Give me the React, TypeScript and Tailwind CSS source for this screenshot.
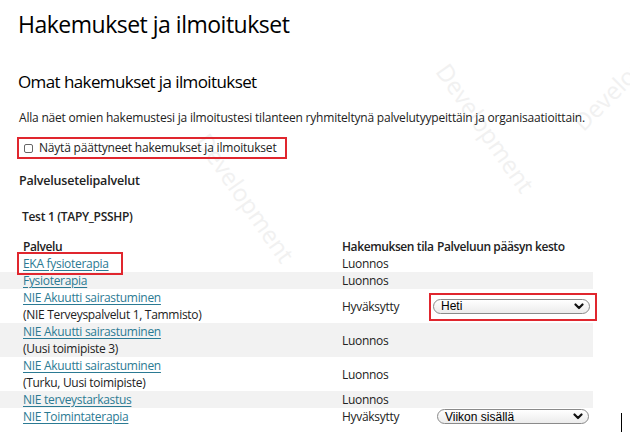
import React from "react";

type Row = {
  name: string;
  place?: string;
  status: string;
  duration?: string;
  striped?: boolean;
  marked?: boolean;
};

const rows: Row[] = [
  { name: "EKA fysioterapia", status: "Luonnos", marked: true },
  { name: "Fysioterapia", status: "Luonnos", striped: true },
  { name: "NIE Akuutti sairastuminen", place: "(NIE Terveyspalvelut 1, Tammisto)", status: "Hyväksytty", duration: "Heti" },
  { name: "NIE Akuutti sairastuminen", place: "(Uusi toimipiste 3)", status: "Luonnos", striped: true },
  { name: "NIE Akuutti sairastuminen", place: "(Turku, Uusi toimipiste)", status: "Luonnos" },
  { name: "NIE terveystarkastus", status: "Luonnos", striped: true },
  { name: "NIE Toimintaterapia", status: "Hyväksytty", duration: "Viikon sisällä" },
];

function Chevron() {
  return (
    <svg width="10" height="7" viewBox="0 0 10 7" className="shrink-0">
      <path d="M1.5 1.5 L5 5 L8.5 1.5" fill="none" stroke="#111" strokeWidth="2.2" strokeLinecap="round" strokeLinejoin="round" />
    </svg>
  );
}

function FakeSelect({ value, w }: { value: string; w: string }) {
  return (
    <div
      className={`flex h-[15px] items-center justify-between rounded-full border border-[#8a8a8a] bg-gradient-to-b from-white to-[#ececec] pl-[7px] pr-[5px] text-[12px] leading-none tracking-normal text-black ${w}`}
      style={{ fontFamily: '"Liberation Sans", Arial, sans-serif' }}
    >
      <span>{value}</span>
      <Chevron />
    </div>
  );
}

const Watermark = ({ className }: { className: string }) => (
  <div className={`pointer-events-none absolute select-none text-[24px] text-[#f1f1f1] ${className}`}>Development</div>
);

export default function App() {
  return (
    <div
      className="relative h-[434px] w-[630px] overflow-hidden bg-white text-[#222]"
      style={{ fontFamily: '"Open Sans", "Noto Sans", sans-serif' }}
    >
      <Watermark className="left-[170px] top-[180px] rotate-[55deg]" />
      <Watermark className="left-[410px] top-[110px] rotate-[55deg]" />
      <Watermark className="left-[555px] top-[55px] -rotate-[45deg]" />

      <div className="relative">
        <h1 className="pl-[18px] pt-[9px] text-[23px] leading-[31px] tracking-[-0.5px] text-black">Hakemukset ja ilmoitukset</h1>
        <h2 className="mt-[30px] pl-[18px] text-[17px] leading-[23px] tracking-[-0.6px] text-black">Omat hakemukset ja ilmoitukset</h2>
        <p className="mt-[17px] pl-[19px] text-[12px] leading-[16px] tracking-[-0.2px]">
          Alla näet omien hakemustesi ja ilmoitustesi tilanteen ryhmiteltynä palvelutyypeittäin ja organisaatioittain.
        </p>

        <div className="ml-[17px] mt-[11px] flex h-[22px] w-[270px] items-center gap-[6px] border-2 border-[#e0262e] pl-[5px] text-[12px] tracking-[-0.2px]">
          <span className="h-[9px] w-[9px] rounded-[2px] border border-[#666] bg-white" />
          <span>Näytä päättyneet hakemukset ja ilmoitukset</span>
        </div>

        <div className="mt-[13px] pl-[19px] text-[12.5px] font-semibold leading-[18px] tracking-[-0.2px]">Palvelusetelipalvelut</div>
        <div className="mt-[18px] pl-[22px] text-[12px] font-semibold leading-[17px] tracking-[-0.3px]">Test 1 (TAPY_PSSHP)</div>

        <div className="mt-[13px] w-[593px] whitespace-nowrap text-[12px] leading-[17px] tracking-[-0.3px]">
          <div className="grid grid-cols-[342px_91px_160px] font-semibold tracking-[-0.4px]">
            <div className="pl-[23px]">Palvelu</div>
            <div>Hakemuksen tila</div>
            <div className="pl-[4px]">Palveluun pääsyn kesto</div>
          </div>
          {rows.map((r, i) => (
            <div
              key={i}
              className={`grid grid-cols-[342px_91px_160px] items-center ${r.striped ? "bg-[#f2f2f2]" : ""}`}
            >
              <div className="pl-[23px]">
                <div className="relative inline-block">
                  {r.marked && (
                    <span className="absolute -left-[6px] -top-[3px] h-[23px] w-[106px] border-2 border-[#e0262e]" />
                  )}
                  <a href="#" className="text-[#2b7a93] underline underline-offset-2">
                    {r.name}
                  </a>
                </div>
                {r.place && <div>{r.place}</div>}
              </div>
              <div>{r.status}</div>
              <div>
                {r.duration === "Heti" && (
                  <div className="relative">
                    <span className="absolute -left-[4px] -top-[6px] h-[28px] w-[168px] border-2 border-[#e0262e]" />
                    <FakeSelect value="Heti" w="w-[157px]" />
                  </div>
                )}
                {r.duration === "Viikon sisällä" && (
                  <div className="pl-[4px]">
                    <FakeSelect value="Viikon sisällä" w="w-[152px]" />
                  </div>
                )}
              </div>
            </div>
          ))}
        </div>
      </div>
      <div className="absolute left-[621px] top-[413px] h-[19px] w-px bg-black" />
    </div>
  );
}
